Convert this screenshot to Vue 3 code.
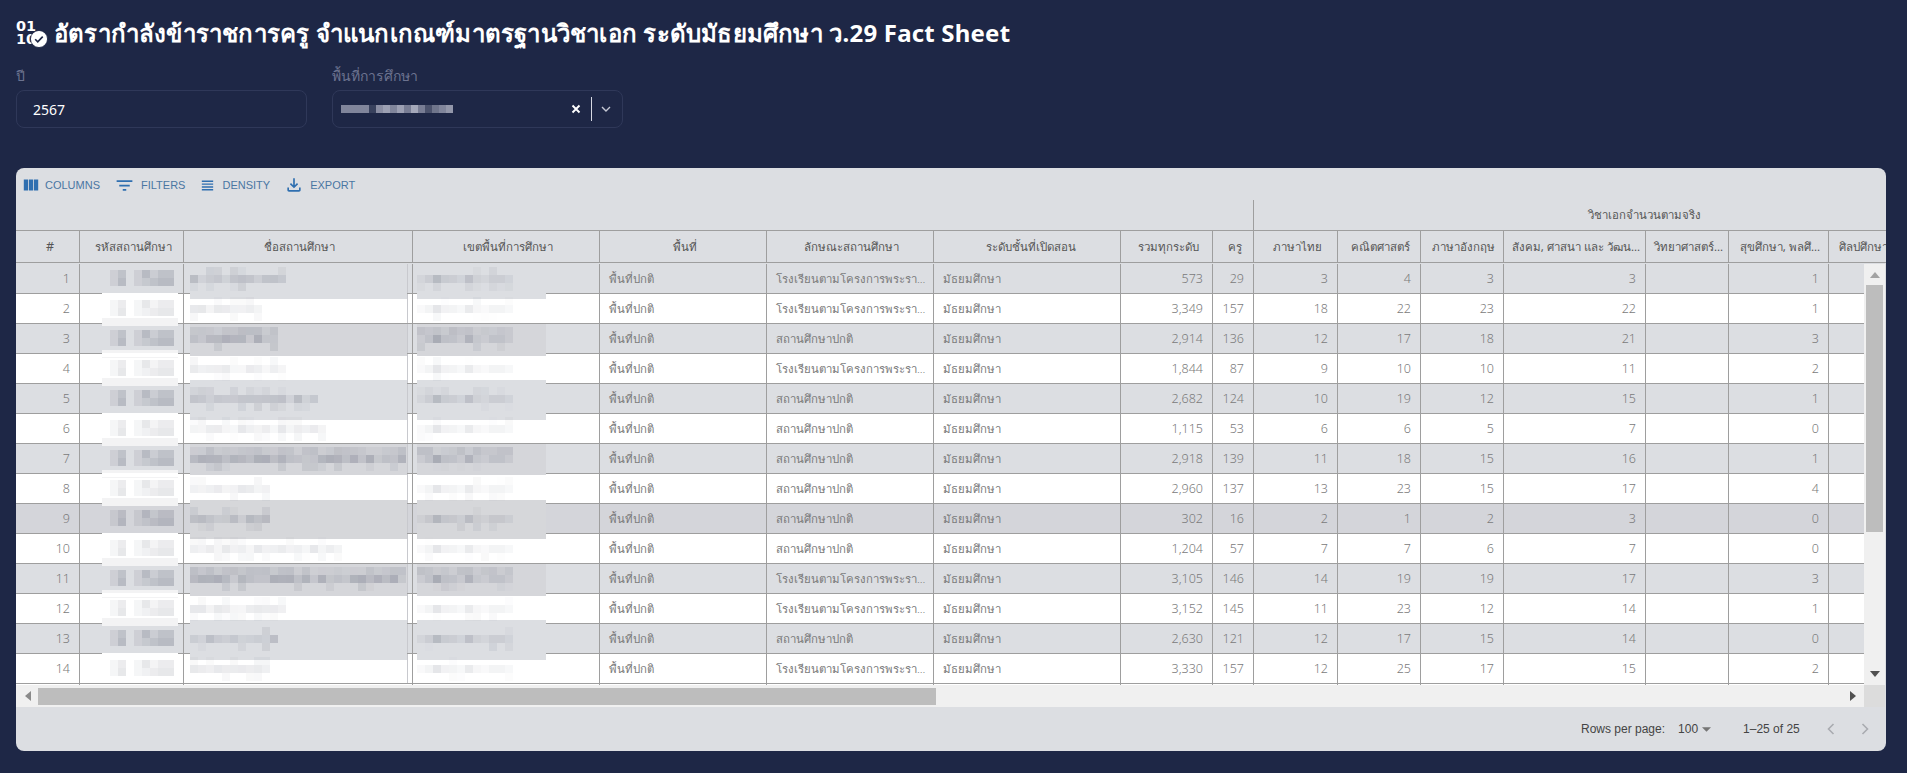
<script setup>
const headers = ['#','รหัสสถานศึกษา','ชื่อสถานศึกษา','เขตพื้นที่การศึกษา','พื้นที่','ลักษณะสถานศึกษา','ระดับชั้นที่เปิดสอน','รวมทุกระดับ','ครู','ภาษาไทย','คณิตศาสตร์','ภาษาอังกฤษ','สังคม, ศาสนา และ วัฒน...','วิทยาศาสตร์...','สุขศึกษา, พลศึ...','ศิลปศึกษา']

const LONG = 'โรงเรียนตามโครงการพระรา...'
const NORMAL = 'สถานศึกษาปกติ'
const source = [
  [LONG,'573',29,3,4,3,3,1,12],
  [LONG,'3,349',157,18,22,23,22,1,9],
  [NORMAL,'2,914',136,12,17,18,21,3,11],
  [LONG,'1,844',87,9,10,10,11,2,12],
  [NORMAL,'2,682',124,10,19,12,15,1,16],
  [NORMAL,'1,115',53,6,6,5,7,0,17],
  [NORMAL,'2,918',139,11,18,15,16,1,27],
  [NORMAL,'2,960',137,13,23,15,17,4,10],
  [NORMAL,'302',16,2,1,2,3,0,10],
  [NORMAL,'1,204',57,7,7,6,7,0,19],
  [LONG,'3,105',146,14,19,19,17,3,27],
  [LONG,'3,152',145,11,23,12,14,1,12],
  [NORMAL,'2,630',121,12,17,15,14,0,11],
  [LONG,'3,330',157,12,25,17,15,2,10],
]

let seed = 37
function rnd() {
  seed = (seed * 16807) % 2147483647
  return (seed % 1000) / 1000
}
const codeTop = [.1,.2,0,.1,.25,.12,.2,.2]
const codeBottom = [.1,.25,0,.1,.15,.2,.25,.25]
const regionMid = [.08,.16,.34,.18,.16,.1,.28,.12,.08,.16,.16,.1]

function tile(v, gain) {
  return `rgba(118,122,138,${(v * gain).toFixed(3)})`
}
function makeName(n, gain, busy) {
  const out = []
  for (let r = 0; r < 3; r++) {
    for (let c = 0; c < n; c++) {
      const base = r === 1 ? 0.1 + rnd() * 0.22 : (busy && r === 0 ? 0.05 + rnd() * 0.15 : (rnd() < 0.4 ? 0.03 + rnd() * 0.1 : 0))
      out.push(tile(base, gain))
    }
  }
  return out
}
function makeRegion(gain, busy) {
  const out = []
  for (let r = 0; r < 3; r++) {
    for (let c = 0; c < 12; c++) {
      const base = r === 1 ? regionMid[c] : (r === 0 && busy ? 0.05 + rnd() * 0.15 : (rnd() < 0.25 ? rnd() * 0.1 : 0))
      out.push(tile(base, gain))
    }
  }
  return out
}
// vertical extent of the cover patch on grey rows, as [offset from the row top, height]
const patches = { 1:[0,35], 3:[0,32], 5:[-4,40], 7:[0,31], 9:[-4,39], 11:[0,32], 13:[-4,40] }
const busyRows = [3,7,11]

const rows = source.map((s, i) => {
  const n = i + 1
  const odd = n % 2 === 1
  const busy = busyRows.includes(n)
  const gain = odd ? (busy ? 1.35 : 1.05) : 0.55
  const code = [...codeTop, ...codeBottom].map(v => tile(v, odd ? 1.4 : 0.7))
  return {
    n, odd, busy,
    dark: n === 9,
    kind: s[0], total: s[1], teachers: s[2],
    nums: [s[3], s[4], s[5], s[6], '', s[7], ''],
    code,
    name: makeName(s[8], gain, busy),
    nameCols: s[8],
    region: makeRegion(gain, busy),
    patch: patches[n] || null,
    stripTop: n === 4 || n === 8 || n === 12,
    stripBottom: n % 2 === 0 && n !== 14,
  }
})

const selectTiles = [.55,.55,.55,.55,.15,.6,.7,.55,.7,.5,.75,.5,.25,.45,.55,.65].map(v => `rgba(210,212,225,${v})`)
</script>

<template>
  <div class="page">
    <h1 class="title">
      <span class="badge">
        <span class="badge-line">01</span>
        <span class="badge-line">10</span>
        <svg class="badge-check" viewBox="0 0 16 16">
          <circle cx="8" cy="8" r="7.6" fill="#fff" stroke="#1e2746" stroke-width="0.8" />
          <path d="M4.6 8.2l2.3 2.3 4.4-4.6" fill="none" stroke="#1e2746" stroke-width="1.5" />
        </svg>
      </span>
      <span>อัตรากำลังข้าราชการครู จำแนกเกณฑ์มาตรฐานวิชาเอก ระดับมัธยมศึกษา ว.29 Fact Sheet</span>
    </h1>

    <div class="filters">
      <div class="field">
        <div class="label">ปี</div>
        <div class="input"><span class="value">2567</span></div>
      </div>
      <div class="field">
        <div class="label">พื้นที่การศึกษา</div>
        <div class="input select">
          <div class="sel-mosaic">
            <i v-for="(c, i) in selectTiles" :key="i" :style="{ background: c }"></i>
          </div>
          <svg class="sel-x" viewBox="0 0 10 10"><path d="M1.5 1.5l7 7M8.5 1.5l-7 7" stroke="#fff" stroke-width="1.9" fill="none" /></svg>
          <span class="sel-sep"></span>
          <svg class="sel-chev" viewBox="0 0 10 6"><path d="M1 1l4 4 4-4" stroke="#c5c8d4" stroke-width="1.4" fill="none" /></svg>
        </div>
      </div>
    </div>

    <section class="card">
      <div class="toolbar">
        <button class="tool">
          <svg width="16" height="16" viewBox="3 2 18 20"><path d="M14.67 5v14H9.33V5h5.34zm1 14H21V5h-5.33v14zm-7.34 0V5H3v14h5.33z" /></svg>
          <span>Columns</span>
        </button>
        <button class="tool">
          <svg width="21" height="21" viewBox="0 0 24 24"><path d="M10 18h4v-2h-4v2zM3 6v2h18V6H3zm3 7h12v-2H6v2z" /></svg>
          <span>Filters</span>
        </button>
        <button class="tool">
          <svg width="17" height="17" viewBox="0 0 24 24"><path d="M4 15h16v-2H4v2zm0 4h16v-2H4v2zm0-8h16V9H4v2zm0-6v2h16V5H4z" /></svg>
          <span>Density</span>
        </button>
        <button class="tool">
          <svg width="20" height="20" viewBox="0 0 24 24"><path d="M18 15v3H6v-3H4v3c0 1.1.9 2 2 2h12c1.1 0 2-.9 2-2v-3h-2zm-1-4-1.41-1.41L13 12.17V4h-2v8.17L8.41 9.59 7 11l5 5 5-5z" /></svg>
          <span>Export</span>
        </button>
      </div>

      <div class="group-row">
        <div class="group-spacer"></div>
        <div class="group-cell">วิชาเอกจำนวนตามจริง</div>
      </div>
      <div class="head-row grid">
        <div v-for="h in headers" :key="h" class="hcell">{{ h }}</div>
      </div>

      <div class="body">
        <div class="viewport">
          <div v-for="r in rows" :key="r.n" class="row grid" :class="{ even: !r.odd, dark: r.dark }">
            <div class="cell num">{{ r.n }}</div>
            <div class="cell blur">
              <div v-if="r.stripTop" class="strip code-strip top"></div>
              <div v-if="r.stripBottom" class="strip code-strip bottom"></div>
              <div v-if="!r.odd" class="white-cover"></div>
              <div class="mosaic code-mosaic">
                <i v-for="(c, i) in r.code" :key="i" :style="{ background: c }"></i>
              </div>
            </div>
            <div class="cell blur name-cell">
              <div v-if="r.patch" class="cover name-cover" :class="{ busy: r.busy }" :style="{ top: r.patch[0] + 'px', height: r.patch[1] + 'px' }"></div>
              <div class="mosaic name-mosaic" :style="{ gridTemplateColumns: `repeat(${r.nameCols}, 8px)` }">
                <i v-for="(c, i) in r.name" :key="i" :style="{ background: c }"></i>
              </div>
            </div>
            <div class="cell blur">
              <div v-if="r.patch" class="cover region-cover" :class="{ busy: r.busy }" :style="{ top: r.patch[0] + 'px', height: r.patch[1] + 'px' }"></div>
              <div class="mosaic region-mosaic">
                <i v-for="(c, i) in r.region" :key="i" :style="{ background: c }"></i>
              </div>
            </div>
            <div class="cell thai">พื้นที่ปกติ</div>
            <div class="cell thai">{{ r.kind }}</div>
            <div class="cell thai">มัธยมศึกษา</div>
            <div class="cell num">{{ r.total }}</div>
            <div class="cell num">{{ r.teachers }}</div>
            <div v-for="(v, i) in r.nums" :key="i" class="cell num">{{ v }}</div>
            <div class="cell"></div>
          </div>
          <div class="row grid stub">
            <div v-for="h in headers" :key="h" class="cell"></div>
          </div>
        </div>
        <div class="vbar">
          <svg class="arrow" viewBox="0 0 10 6" width="10" height="6"><path d="M5 0l5 6H0z" fill="#a3a3a3" /></svg>
          <div class="vthumb"></div>
          <svg class="arrow down" viewBox="0 0 10 6" width="10" height="6"><path d="M5 6L0 0h10z" fill="#505050" /></svg>
        </div>
      </div>

      <div class="hbar-row">
        <div class="hbar">
          <svg class="harrow" viewBox="0 0 6 10" width="6" height="10"><path d="M0 5l6-5v10z" fill="#8a8a8a" /></svg>
          <div class="hthumb"></div>
          <svg class="harrow right" viewBox="0 0 6 10" width="6" height="10"><path d="M6 5L0 0v10z" fill="#505050" /></svg>
        </div>
        <div class="corner"></div>
      </div>

      <footer class="footer">
        <span class="rpp">Rows per page:</span>
        <span class="rpp-value">100</span>
        <svg class="caret" viewBox="0 0 10 5" width="9" height="5"><path d="M0 0h10L5 5z" fill="#757575" /></svg>
        <span class="range">1–25 of 25</span>
        <svg class="pager" viewBox="0 0 8 12" width="8" height="12"><path d="M6.5 1L1.5 6l5 5" fill="none" stroke="#a9abb0" stroke-width="1.6" /></svg>
        <svg class="pager next" viewBox="0 0 8 12" width="8" height="12"><path d="M1.5 1l5 5-5 5" fill="none" stroke="#a9abb0" stroke-width="1.6" /></svg>
      </footer>
    </section>
  </div>
</template>

<style>
html, body { margin: 0; background: #1e2746; }
</style>

<style scoped>
.page {
  width: 1907px;
  height: 773px;
  box-sizing: border-box;
  padding-left: 16px;
  background: #1e2746;
  font-family: "Noto Sans", "Open Sans", sans-serif;
  overflow: hidden;
}
.title {
  display: flex;
  align-items: center;
  gap: 6px;
  height: 66px;
  margin: 0;
  color: #fff;
  font-size: 24px;
  font-weight: 700;
  letter-spacing: 0.2px;
  white-space: nowrap;
}
.badge {
  position: relative;
  display: flex;
  flex-direction: column;
  width: 32px;
  font-family: "DejaVu Sans", sans-serif;
  font-size: 14.5px;
  font-weight: 700;
  line-height: 13px;
  letter-spacing: -0.2px;
}
.badge-check {
  position: absolute;
  left: 14px;
  top: 10px;
  width: 18px;
  height: 18px;
}
.filters { display: flex; gap: 25px; }
.field { width: 291px; }
.label {
  height: 24px;
  color: #6c7390;
  font-size: 14px;
  line-height: 19px;
}
.input {
  display: flex;
  align-items: center;
  height: 38px;
  box-sizing: border-box;
  border: 1px solid #2f3859;
  border-radius: 8px;
  padding-left: 16px;
  color: #fff;
  font-size: 14px;
}
.select { padding-left: 8px; }
.sel-mosaic {
  display: grid;
  grid-template-columns: repeat(16, 7px);
  height: 8px;
  margin-right: 118px;
}
.sel-mosaic i { display: block; height: 8px; }
.sel-x { width: 10px; height: 10px; }
.sel-sep { width: 1px; height: 24px; margin: 0 9px 0 10px; background: #d6d8e2; }
.sel-chev { width: 10px; height: 6px; }

.card {
  width: 1870px;
  height: 583px;
  margin-top: 40px;
  background: #dcdee2;
  border-radius: 8px;
  overflow: hidden;
  display: flex;
  flex-direction: column;
}
.toolbar {
  display: flex;
  align-items: center;
  gap: 14px;
  height: 34px;
  margin-bottom: -2px;
  flex: none;
  padding: 0 0 0 7px;
  box-sizing: border-box;
}
.tool {
  display: flex;
  align-items: center;
  gap: 6px;
  padding: 0;
  border: 0;
  background: none;
  color: #4a76a2;
  font-family: "Liberation Sans", sans-serif;
  font-size: 11px;
  text-transform: uppercase;
}
.tool svg { fill: #2f6fb0; }

.grid {
  display: grid;
  grid-template-columns: 64px 104px 229px 187px 167px 167px 187px 92px 41px 84px 83px 83px 142px 83px 100px 100px;
  width: max-content;
}
.group-row {
  display: flex;
  flex: none;
  height: 31px;
  box-sizing: border-box;
  border-bottom: 1px solid #9e9e9e;
}
.group-spacer { width: 1237px; flex: none; }
.group-cell {
  width: 782px;
  flex: none;
  box-sizing: border-box;
  border-left: 1px solid #9e9e9e;
  text-align: center;
  color: #555;
  font-size: 11.4px;
  line-height: 30px;
}
.head-row {
  flex: none;
  height: 33px;
  box-sizing: border-box;
  padding-bottom: 1px;
}
.hcell {
  box-sizing: border-box;
  height: 32px;
  padding-left: 3px;
  border-right: 1px solid #9e9e9e;
  border-bottom: 1px solid #9e9e9e;
  color: #555;
  font-size: 11.5px;
  line-height: 31px;
  text-align: center;
  white-space: nowrap;
  overflow: hidden;
}
.hcell:first-child { padding-left: 5px; font-size: 12.5px; }
.hcell:nth-child(7) { padding-left: 8px; }
.hcell:nth-child(16) { padding-left: 10px; text-align: left; }
.body {
  display: flex;
  flex: none;
  height: 421px;
}
.viewport {
  width: 1848px;
  height: 421px;
  overflow: hidden;
}
.row {
  height: 30px;
  background: #dcdee2;
}
.row.even { background: #fff; }
.row.dark { background: #d4d5da; }
.cell {
  position: relative;
  box-sizing: border-box;
  height: 30px;
  padding: 0 9px;
  border-right: 1px solid #9e9e9e;
  border-bottom: 1px solid #9e9e9e;
  color: #7a7a7a;
  font-size: 12.5px;
  font-weight: 300;
  line-height: 30px;
  white-space: nowrap;
}
.thai { font-size: 11.4px; }
.num { text-align: right; }
.stub { height: 2px; background: #fff; }
.stub .cell { height: 2px; border-bottom: 0; }

.strip {
  position: absolute;
  z-index: 1;
  left: 22px;
  width: 76px;
  height: 8px;
  background: #f3f3f4;
}
.strip.top { top: -4px; }
.strip.bottom { top: 24px; }
.white-cover {
  position: absolute;
  z-index: 1;
  left: 22px;
  top: -1px;
  width: 76px;
  height: 4px;
  background: #fff;
}
.mosaic { position: absolute; z-index: 2; display: grid; }
.mosaic i { display: block; height: 8px; }
.code-mosaic {
  left: 30px;
  top: 6px;
  grid-template-columns: repeat(8, 8px);
}
.name-mosaic { left: 6px; top: 3px; }
.region-mosaic {
  left: 4px;
  top: 3px;
  grid-template-columns: repeat(12, 8px);
}
.cover {
  position: absolute;
  z-index: 1;
  background: #dcdee2;
}
.cover.busy {
  background: #d5d6da;
}
.dark .cover { background: #d6d7da; }
.name-cover { left: 6px; width: 217px; }
.region-cover { left: 4px; width: 129px; }
.name-cell::after {
  content: "";
  position: absolute;
  z-index: 3;
  left: 223px;
  top: 0;
  bottom: 0;
  width: 1px;
  background: #c8c9ce;
}

.vbar {
  display: flex;
  flex-direction: column;
  align-items: center;
  width: 21px;
  height: 421px;
  background: #f0f0f0;
}
.arrow { margin: 8px 0 7px; flex: none; }
.arrow.down { margin: 0; margin-top: auto; margin-bottom: 8px; }
.vthumb {
  width: 17px;
  height: 247px;
  background: #bdbdbd;
}
.hbar-row { display: flex; flex: none; height: 22px; }
.hbar {
  display: flex;
  align-items: center;
  width: 1848px;
  background: #f0f0f0;
}
.harrow { margin-left: 9px; margin-right: 7px; flex: none; }
.harrow.right { margin-left: auto; margin-right: 8px; }
.hthumb {
  width: 898px;
  height: 17px;
  background: #bdbdbd;
}
.corner { width: 21px; background: #dcdcdc; }
.footer {
  flex: 1;
  display: flex;
  align-items: center;
  padding-left: 1565px;
  color: #444;
  font-family: "Liberation Sans", sans-serif;
  font-size: 12px;
}
.rpp-value { margin-left: 13px; }
.caret { margin-left: 4px; }
.range { margin-left: 32px; }
.pager { margin-left: 27px; }
.pager.next { margin-left: 26px; }
</style>
